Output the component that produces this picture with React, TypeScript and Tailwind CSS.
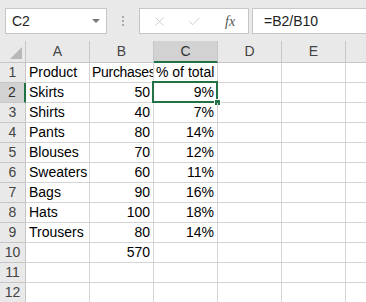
import { X, Check } from 'lucide-react';

const cols = ['A', 'B', 'C', 'D', 'E', ''];

const rows: string[][] = [
  ['Product', 'Purchases', '% of total'],
  ['Skirts', '50', '9%'],
  ['Shirts', '40', '7%'],
  ['Pants', '80', '14%'],
  ['Blouses', '70', '12%'],
  ['Sweaters', '60', '11%'],
  ['Bags', '90', '16%'],
  ['Hats', '100', '18%'],
  ['Trousers', '80', '14%'],
  ['', '570', ''],
  ['', '', ''],
  ['', '', ''],
];

export default function App() {
  return (
    <div
      className="w-[366px] h-[302px] overflow-hidden bg-white text-black"
      style={{ fontFamily: '"Liberation Sans", Arial, sans-serif' }}
    >
      {/* formula bar */}
      <div className="h-[41px] bg-[#e9e9e9] flex items-start pt-[8px] pl-[5px]">
        <div className="w-[102px] h-[26px] bg-white border border-[#c6c6c6] flex items-center justify-between pl-[6px] pr-[6px]">
          <span className="text-[14px] text-[#222]">C2</span>
          <span className="w-0 h-0 border-l-[4px] border-r-[4px] border-t-[4px] border-l-transparent border-r-transparent border-t-[#777]" />
        </div>
        <div className="w-[32px] h-[26px] flex flex-col items-center justify-center gap-[2px]">
          <span className="w-[2px] h-[2px] bg-[#aaa]" />
          <span className="w-[2px] h-[2px] bg-[#aaa]" />
          <span className="w-[2px] h-[2px] bg-[#aaa]" />
        </div>
        <div className="w-[110px] h-[26px] bg-white border border-[#c6c6c6] flex items-center">
          <X size={15} strokeWidth={1.2} className="text-[#c0c0c0] ml-[12px]" />
          <Check size={15} strokeWidth={1.2} className="text-[#c0c0c0] ml-[20px]" />
          <span
            className="ml-[23px] text-[14px] italic text-[#555]"
            style={{ fontFamily: '"Liberation Serif", serif' }}
          >
            fx
          </span>
        </div>
        <div className="flex-1 h-[26px] ml-[3px] bg-white border border-[#c6c6c6] border-r-0 flex items-center pl-[11px]">
          <span className="text-[14px] text-[#222]">=B2/B10</span>
        </div>
      </div>

      {/* column headers */}
      <div className="flex h-[22px] bg-[#e9e9e9]">
        <div className="w-[26px] shrink-0 border-r border-b border-[#c6c6c6] relative">
          <svg className="absolute right-[3px] bottom-[3px]" width="12" height="12" viewBox="0 0 12 12">
            <polygon points="12,0 12,12 0,12" fill="#b8b8b8" />
          </svg>
        </div>
        {cols.map((c, i) => (
          <div
            key={i}
            className={
              c === 'C'
                ? 'w-16 shrink-0 flex items-center justify-center text-[14px] text-[#333] bg-[#d2d2d2] border-r border-[#c6c6c6] border-b-2 border-b-[#217346]'
                : 'w-16 shrink-0 flex items-center justify-center text-[14px] text-[#444] border-r border-b border-[#c6c6c6]'
            }
          >
            {c}
          </div>
        ))}
      </div>

      {/* grid rows */}
      {rows.map((r, ri) => {
        const n = ri + 1;
        const sel = n === 2;
        return (
          <div key={n} className="flex h-[20px]">
            <div
              className={
                sel
                  ? 'w-[26px] shrink-0 flex items-center justify-center text-[14px] text-[#333] bg-[#d2d2d2] border-b border-[#c6c6c6] border-r-2 border-r-[#217346]'
                  : 'w-[26px] shrink-0 flex items-center justify-center text-[14px] text-[#444] bg-[#e9e9e9] border-r border-b border-[#c6c6c6]'
              }
            >
              {n}
            </div>
            <div className="w-16 shrink-0 border-r border-b border-[#d4d4d4] flex items-center pl-[3px] text-[14px] whitespace-nowrap">
              {r[0]}
            </div>
            <div
              className={
                n === 1
                  ? 'w-16 shrink-0 border-r border-b border-[#d4d4d4] flex items-center pl-[2px] text-[14px] whitespace-nowrap overflow-hidden tracking-[-0.3px]'
                  : 'w-16 shrink-0 border-r border-b border-[#d4d4d4] flex items-center justify-end pr-[3px] text-[14px] whitespace-nowrap'
              }
            >
              {r[1]}
            </div>
            <div
              className={
                n === 1
                  ? 'w-16 shrink-0 border-r border-b border-[#d4d4d4] flex items-center pl-[2px] text-[14px] whitespace-nowrap'
                  : 'w-16 shrink-0 border-r border-b border-[#d4d4d4] flex items-center justify-end pr-[3px] text-[14px] whitespace-nowrap relative'
              }
            >
              {r[2]}
              {sel && (
                <>
                  <div className="absolute left-[-2px] top-[-2px] right-[-1px] bottom-[-1px] border-2 border-[#217346]" />
                  <div className="absolute right-[-4px] bottom-[-4px] w-[7px] h-[7px] bg-[#217346] border border-white" />
                </>
              )}
            </div>
            <div className="w-16 shrink-0 border-r border-b border-[#d4d4d4]" />
            <div className="w-16 shrink-0 border-r border-b border-[#d4d4d4]" />
            <div className="w-16 shrink-0 border-r border-b border-[#d4d4d4]" />
          </div>
        );
      })}
    </div>
  );
}
